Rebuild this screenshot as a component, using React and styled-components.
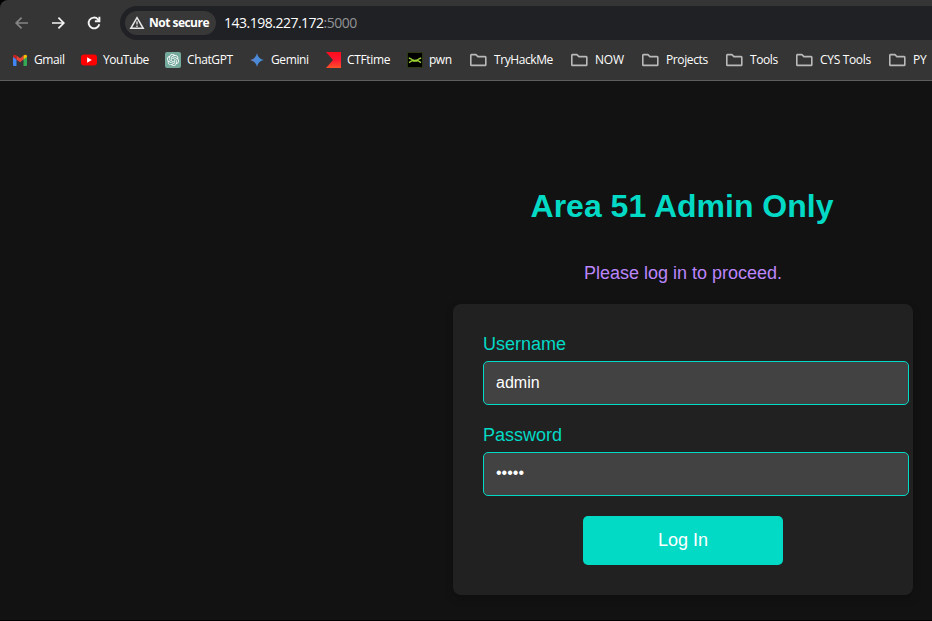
import React from 'react';
import styled, { createGlobalStyle } from 'styled-components';

const GlobalStyle = createGlobalStyle`
  * { box-sizing: border-box; }
  body { margin: 0; background: #121212; overflow: hidden; }
`;

const Window = styled.div`
  width: 932px;
  height: 621px;
  display: flex;
  flex-direction: column;
  overflow: hidden;
  background: #000;
`;

const Chrome = styled.header`
  flex: none;
  height: 81px;
  background: #353535;
  border-bottom: 1px solid #5e5e5e;
  border-top-left-radius: 8px;
  font-family: 'Open Sans', 'Noto Sans', sans-serif;
`;

const Toolbar = styled.div`
  height: 46px;
  padding: 6px 0 6px 14px;
  display: flex;
  align-items: flex-start;
`;

const NavButton = styled.button`
  width: 36px;
  height: 34px;
  padding: 0;
  border: 0;
  background: none;
  color: ${(p) => (p.$dim ? '#858585' : '#f4f4f4')};
  display: flex;
  align-items: center;
`;

const AddressBar = styled.div`
  flex: 1;
  height: 34px;
  margin-left: -2px;
  padding-left: 5px;
  display: flex;
  align-items: center;
  gap: 8px;
  background: #202124;
  border-radius: 17px 0 0 17px;
`;

const Security = styled.div`
  width: 91px;
  height: 24px;
  padding-left: 4px;
  display: flex;
  align-items: center;
  gap: 4px;
  border-radius: 12px;
  background: #383838;
  color: #fff;
  white-space: nowrap;
`;

const SecurityText = styled.span`
  font-size: 12px;
  line-height: 16px;
  font-weight: 700;
  letter-spacing: -0.52px;
`;

const Url = styled.span`
  color: #fff;
  font-size: 14px;
  line-height: 18px;
  letter-spacing: -0.5px;
`;

const Port = styled.span`
  color: #929396;
`;

const Bookmarks = styled.nav`
  height: 28px;
  padding-left: 12px;
  display: flex;
  overflow: hidden;
`;

const Bookmark = styled.div`
  flex: none;
  width: ${(p) => p.$width}px;
  display: flex;
  align-items: center;
  gap: 6px;
`;

const BookmarkLabel = styled.span`
  color: #fff;
  font-size: 12px;
  line-height: 16px;
  white-space: nowrap;
  letter-spacing: ${(p) => p.$track}px;
`;

const Page = styled.main`
  flex: none;
  height: 539px;
  padding: 105px 19px 0 453px;
  background: #121212;
  font-family: 'Liberation Sans', Arial, sans-serif;
`;

const Title = styled.h1`
  margin: 0;
  padding-right: 2px;
  color: #03dac6;
  font-size: 32px;
  line-height: 40px;
  text-align: center;
  white-space: nowrap;
`;

const Prompt = styled.p`
  margin: 37px 0 20px;
  color: #bb86fc;
  font-size: 18px;
  line-height: 21px;
  text-align: center;
`;

const Card = styled.form`
  height: 291px;
  margin: 0;
  padding: 30px;
  border-radius: 8px;
  background: #212121;
  box-shadow: 0 4px 8px rgba(0, 0, 0, 0.2);
`;

const Field = styled.div`
  height: 91px;
`;

const Label = styled.label`
  display: block;
  height: 27px;
  color: #03dac6;
  font-size: 18px;
  line-height: 20px;
`;

const Input = styled.input`
  display: block;
  width: 426px;
  height: 44px;
  padding: ${(p) => (p.type === 'password' ? '11px 12px 13px' : '12px')};
  border: 1px solid #03dac6;
  border-radius: 5px;
  outline: 0;
  background: #424242;
  color: #fff;
  font-family: inherit;
  font-size: 16px;
`;

const Submit = styled.button`
  display: block;
  width: 200px;
  height: 49px;
  margin: 0 auto;
  padding: 0;
  border: 0;
  border-radius: 5px;
  background: #03dac6;
  color: #fff;
  font-family: inherit;
  font-size: 18px;
`;

const Arrow = ({ flip }) => (
  <svg width="16" height="16" viewBox="0 0 16 16" fill="none" stroke="currentColor" strokeWidth="1.7">
    <path d={flip ? 'M2 8H13.5M8.4 2.6 13.8 8 8.4 13.4' : 'M14 8H2.5M7.6 2.6 2.2 8 7.6 13.4'} />
  </svg>
);

const Reload = () => (
  <svg width="16" height="16" viewBox="0 0 16 16" fill="none" stroke="currentColor" strokeWidth="1.9">
    <path d="M13.3 9.2A5.4 5.4 0 1 1 12 4.3L13.5 6" />
    <path d="M13.4 1.8V6.2H8.9" />
  </svg>
);

const Warning = () => (
  <svg width="16" height="16" viewBox="0 0 16 16" fill="none" stroke="#e8e8e8" strokeWidth="1.5">
    <path d="M8 2.7 14.2 13.3H1.8Z" />
    <path d="M8 6.2V9.6M8 10.6V12" strokeWidth="1.3" />
  </svg>
);

const Gmail = () => (
  <svg width="16" height="16" viewBox="0 0 16 16">
    <path fill="#4285f4" d="M1 4.5 4.5 7V14H2.1A1.1 1.1 0 0 1 1 12.9Z" />
    <path fill="#34a853" d="M11.5 7 15 4.5V12.9A1.1 1.1 0 0 1 13.9 14H11.5Z" />
    <path fill="#ea4335" d="M4.5 3.5 8 6.2 11.5 3.5V7.5L8 10.2 4.5 7.5Z" />
    <path fill="#c5221f" d="M1 4.4C1 2.7 2.8 2.2 4.5 3.5V7.5L1 4.9Z" />
    <path fill="#fbbc04" d="M11.5 3.5C13.2 2.2 15 2.7 15 4.4V4.9L11.5 7.5Z" />
  </svg>
);

const YouTube = () => (
  <svg width="16" height="16" viewBox="0 0 16 16">
    <rect y="2.4" width="16" height="11.2" rx="3" fill="#f00" />
    <path d="M6.1 5.3V10.7L10.8 8Z" fill="#fff" />
  </svg>
);

const ChatGPT = () => (
  <svg width="16" height="16" viewBox="0 0 16 16">
    <rect width="16" height="16" rx="2" fill="#74aa9c" />
    <g transform="translate(2 2) scale(.5)" fill="#fff">
      <path d="M22.2819 9.8211a5.9847 5.9847 0 0 0-.5157-4.9108 6.0462 6.0462 0 0 0-6.5098-2.9A6.0651 6.0651 0 0 0 4.9807 4.1818a5.9847 5.9847 0 0 0-3.9977 2.9 6.0462 6.0462 0 0 0 .7427 7.0966 5.98 5.98 0 0 0 .511 4.9107 6.051 6.051 0 0 0 6.5146 2.9001A5.9847 5.9847 0 0 0 13.2599 24a6.0557 6.0557 0 0 0 5.7718-4.2058 5.9894 5.9894 0 0 0 3.9977-2.9001 6.0557 6.0557 0 0 0-.7475-7.0729zm-9.022 12.6081a4.4755 4.4755 0 0 1-2.8764-1.0408l.1419-.0804 4.7783-2.7582a.7948.7948 0 0 0 .3927-.6813v-6.7369l2.02 1.1686a.071.071 0 0 1 .038.052v5.5826a4.504 4.504 0 0 1-4.4945 4.4944zm-9.6607-4.1254a4.4708 4.4708 0 0 1-.5346-3.0137l.142.0852 4.783 2.7582a.7712.7712 0 0 0 .7806 0l5.8428-3.3685v2.3324a.0804.0804 0 0 1-.0332.0615L9.74 19.9502a4.4992 4.4992 0 0 1-6.1408-1.6464zM2.3408 7.8956a4.485 4.485 0 0 1 2.3655-1.9728V11.6a.7664.7664 0 0 0 .3879.6765l5.8144 3.3543-2.0201 1.1685a.0757.0757 0 0 1-.071 0l-4.8303-2.7865A4.504 4.504 0 0 1 2.3408 7.872zm16.5963 3.8558L13.1038 8.364 15.1192 7.2a.0757.0757 0 0 1 .071 0l4.8303 2.7913a4.4944 4.4944 0 0 1-.6765 8.1042v-5.6772a.79.79 0 0 0-.407-.667zm2.0107-3.0231l-.142-.0852-4.7735-2.7818a.7759.7759 0 0 0-.7854 0L9.409 9.2297V6.8974a.0662.0662 0 0 1 .0284-.0615l4.8303-2.7866a4.4992 4.4992 0 0 1 6.6802 4.66zM8.3065 12.863l-2.02-1.1638a.0804.0804 0 0 1-.038-.0567V6.0742a4.4992 4.4992 0 0 1 7.3757-3.4537l-.142.0805L8.704 5.459a.7948.7948 0 0 0-.3927.6813zm1.0976-2.3654l2.602-1.4998 2.6069 1.4998v2.9994l-2.5974 1.4997-2.6067-1.4997Z" />
    </g>
  </svg>
);

const Gemini = () => (
  <svg width="16" height="16" viewBox="0 0 16 16">
    <defs>
      <linearGradient id="gem" x1="0" y1="0" x2="1" y2="0">
        <stop offset="0" stopColor="#7c7fc4" />
        <stop offset=".4" stopColor="#4d88d8" />
        <stop offset="1" stopColor="#3f92dc" />
      </linearGradient>
    </defs>
    <path fill="url(#gem)" d="M8 1.2Q9.2 6.8 14.8 8 9.2 9.2 8 14.8 6.8 9.2 1.2 8 6.8 6.8 8 1.2Z" />
  </svg>
);

const CtfTime = () => (
  <svg width="16" height="16" viewBox="0 0 16 16">
    <defs>
      <linearGradient id="ctf" x1="0" y1="0" x2="0" y2="1">
        <stop offset="0" stopColor="#fd0d1b" />
        <stop offset=".5" stopColor="#ff1730" />
        <stop offset="1" stopColor="#ff5128" />
      </linearGradient>
    </defs>
    <path fill="url(#ctf)" d="M1 0H16V16H1L8 8Z" />
  </svg>
);

const Pwn = () => (
  <svg width="16" height="16" viewBox="0 0 16 16">
    <rect x=".5" y=".5" width="15" height="15" fill="#000" stroke="#2b3a12" />
    <path d="M1.8 6Q3.6 6.4 5 7.6Q8 9 11 7.6Q12.4 6.4 14.2 6M2 10.6 5 8.6Q8 9.6 11 8.6L14 10.6" fill="none" stroke="#9fd334" strokeWidth="1.3" />
  </svg>
);

const Folder = () => (
  <svg width="18" height="16" viewBox="0 0 18 16" fill="none" stroke="#b9b9b9" strokeWidth="1.6" strokeLinejoin="round">
    <path d="M1.4 2.6H5.9L7.9 4.6H15.1Q15.8 4.6 15.8 5.3V12.7Q15.8 13.4 15.1 13.4H1.4Q.8 13.4 .8 12.7V3.3Q.8 2.6 1.4 2.6Z" />
  </svg>
);

const items = [
  { label: 'Gmail', Icon: Gmail, width: 69, track: -0.4 },
  { label: 'YouTube', Icon: YouTube, width: 84, track: -0.5 },
  { label: 'ChatGPT', Icon: ChatGPT, width: 84, track: -0.38 },
  { label: 'Gemini', Icon: Gemini, width: 76, track: -0.38 },
  { label: 'CTFtime', Icon: CtfTime, width: 82, track: -0.35 },
  { label: 'pwn', Icon: Pwn, width: 63, track: -0.5 },
  { label: 'TryHackMe', Icon: Folder, width: 101, track: -0.42 },
  { label: 'NOW', Icon: Folder, width: 71, track: -0.2 },
  { label: 'Projects', Icon: Folder, width: 84, track: -0.38 },
  { label: 'Tools', Icon: Folder, width: 70, track: -0.4 },
  { label: 'CYS Tools', Icon: Folder, width: 93, track: -0.32 },
  { label: 'PY', Icon: Folder, width: 43, track: -0.2 },
];

export default function App() {
  return (
    <>
      <GlobalStyle />
      <Window>
        <Chrome>
          <Toolbar>
            <NavButton $dim aria-label="Back"><Arrow /></NavButton>
            <NavButton aria-label="Forward"><Arrow flip /></NavButton>
            <NavButton aria-label="Reload"><Reload /></NavButton>
            <AddressBar>
              <Security>
                <Warning />
                <SecurityText>Not secure</SecurityText>
              </Security>
              <Url>143.198.227.172<Port>:5000</Port></Url>
            </AddressBar>
          </Toolbar>
          <Bookmarks>
            {items.map(({ label, Icon, width, track }) => (
              <Bookmark key={label} $width={width}>
                <Icon />
                <BookmarkLabel $track={track}>{label}</BookmarkLabel>
              </Bookmark>
            ))}
          </Bookmarks>
        </Chrome>
        <Page>
          <Title>Area 51 Admin Only</Title>
          <Prompt>Please log in to proceed.</Prompt>
          <Card onSubmit={(e) => e.preventDefault()}>
            <Field>
              <Label htmlFor="username">Username</Label>
              <Input id="username" type="text" defaultValue="admin" />
            </Field>
            <Field>
              <Label htmlFor="password">Password</Label>
              <Input id="password" type="password" defaultValue="admin" />
            </Field>
            <Submit type="submit">Log In</Submit>
          </Card>
        </Page>
      </Window>
    </>
  );
}
